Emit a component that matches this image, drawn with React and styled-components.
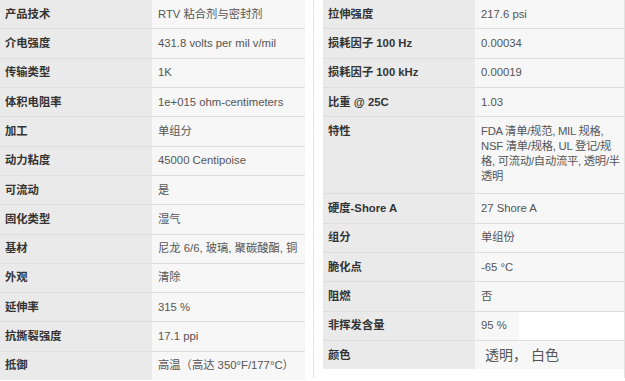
import React from 'react';
import styled, { createGlobalStyle } from 'styled-components';

const GlobalStyle = createGlobalStyle`
  html, body {
    margin: 0;
    padding: 0;
    background: #ffffff;
    overflow: hidden;
  }
  body {
    font-family: "Liberation Sans", Arial, "Noto Sans CJK SC", sans-serif;
  }
`;

const Page = styled.div`
  display: flex;
  align-items: flex-start;
  width: 625px;
  height: 381px;
  overflow: hidden;
`;

const LeftPanel = styled.div`
  width: 305px;
  flex-shrink: 0;
`;

const RightPanel = styled.div`
  margin-left: 8px;
  width: 301px;
  height: 378px;
  padding-left: 9px;
  border-left: 1px solid #e2e2e2;
  border-right: 1px solid #e2e2e2;
`;

const SpecTable = styled.div`
  display: flex;
  flex-direction: column;
`;

const Row = styled.div`
  display: grid;
  grid-template-columns: 152px 1fr;
  border-bottom: 1px solid #dedede;
  &:last-child {
    border-bottom: ${p => (p.$open ? 'none' : '1px solid #dedede')};
  }
  & > div {
    padding-bottom: ${p => (p.$multi ? '9.5px' : '')};
  }
`;

const Label = styled.div`
  background: #eaeaea;
  color: #333;
  font-weight: bold;
  font-size: 11.3px;
  line-height: 15px;
  padding: 6.67px 5px;
`;

const Value = styled.div`
  background: ${p => (p.$plain ? '#ffffff' : '#f7f7f7')};
  color: #555;
  font-size: ${p => (p.$big ? '14px' : '11.3px')};
  letter-spacing: ${p => (p.$tight ? '-0.25px' : 'normal')};
  line-height: 15px;
  padding: ${p => (p.$plain ? '0' : p.$big ? '6.67px 10px' : '6.67px 2px 6.67px 6px')};
`;

const Chip = styled.span`
  display: block;
  background: #f7f7f7;
  padding: 6.67px 6px;
  width: 32px;
`;

const leftRows = [
  ['产品技术', 'RTV 粘合剂与密封剂'],
  ['介电强度', '431.8 volts per mil v/mil'],
  ['传输类型', '1K'],
  ['体积电阻率', '1e+015 ohm-centimeters'],
  ['加工', '单组分'],
  ['动力粘度', '45000 Centipoise'],
  ['可流动', '是'],
  ['固化类型', '湿气'],
  ['基材', '尼龙 6/6, 玻璃, 聚碳酸酯, 铜'],
  ['外观', '清除'],
  ['延伸率', '315 %'],
  ['抗撕裂强度', '17.1 ppi'],
  ['抵御', '高温（高达 350°F/177°C）'],
];

const rightRows = [
  ['拉伸强度', '217.6 psi'],
  ['损耗因子 100 Hz', '0.00034'],
  ['损耗因子 100 kHz', '0.00019'],
  ['比重 @ 25C', '1.03'],
  ['特性', 'FDA 清单/规范, MIL 规格, NSF 清单/规格, UL 登记/规格, 可流动/自动流平, 透明/半透明', true],
  ['硬度-Shore A', '27 Shore A'],
  ['组分', '单组份'],
  ['脆化点', '-65 °C'],
  ['阻燃', '否'],
];

export default function App() {
  return (
    <>
      <GlobalStyle />
      <Page>
        <LeftPanel>
          <SpecTable>
            {leftRows.map(([k, v], i) => (
              <Row key={k} $open={i === leftRows.length - 1}>
                <Label>{k}</Label>
                <Value>{v}</Value>
              </Row>
            ))}
          </SpecTable>
        </LeftPanel>
        <RightPanel>
          <SpecTable>
            {rightRows.map(([k, v, multi]) => (
              <Row key={k} $multi={multi}>
                <Label>{k}</Label>
                <Value $tight={multi}>{v}</Value>
              </Row>
            ))}
            <Row>
              <Label>非挥发含量</Label>
              <Value $plain>
                <Chip>95 %</Chip>
              </Value>
            </Row>
            <Row $open>
              <Label>颜色</Label>
              <Value $big>透明， 白色</Value>
            </Row>
          </SpecTable>
        </RightPanel>
      </Page>
    </>
  );
}
